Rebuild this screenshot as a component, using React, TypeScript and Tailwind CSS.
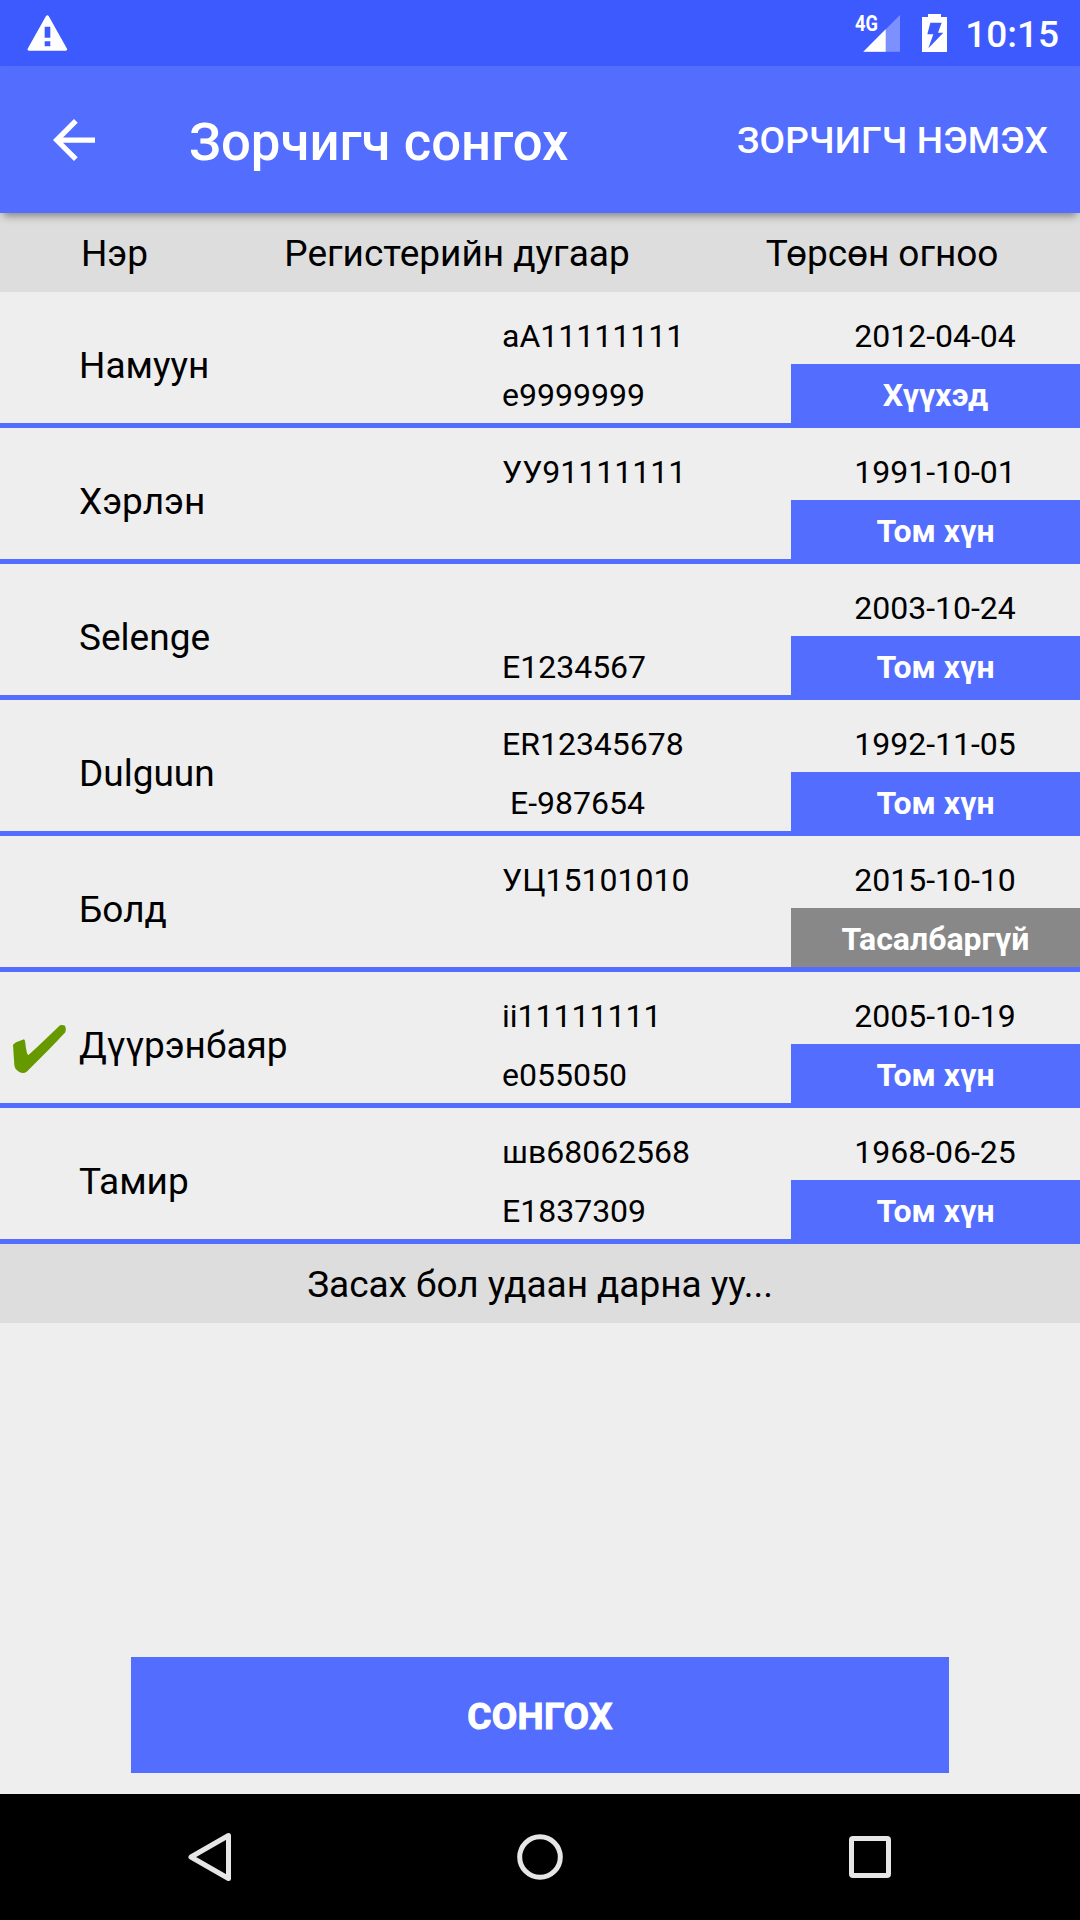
type Passenger = {
  name: string;
  register: string;
  passport: string;
  birth: string;
  kind: string;
  muted?: boolean;
  selected?: boolean;
};

const passengers: Passenger[] = [
  { name: "Намуун", register: "аА11111111", passport: "e9999999", birth: "2012-04-04", kind: "Хүүхэд" },
  { name: "Хэрлэн", register: "УУ91111111", passport: "", birth: "1991-10-01", kind: "Том хүн" },
  { name: "Selenge", register: "", passport: "E1234567", birth: "2003-10-24", kind: "Том хүн" },
  { name: "Dulguun", register: "ER12345678", passport: " E-987654", birth: "1992-11-05", kind: "Том хүн" },
  { name: "Болд", register: "УЦ15101010", passport: "", birth: "2015-10-10", kind: "Тасалбаргүй", muted: true },
  { name: "Дүүрэнбаяр", register: "ii11111111", passport: "e055050", birth: "2005-10-19", kind: "Том хүн", selected: true },
  { name: "Тамир", register: "шв68062568", passport: "E1837309", birth: "1968-06-25", kind: "Том хүн" },
];

function StatusBar() {
  return (
    <div className="flex h-[66px] items-center bg-[#3d5afe] pl-[27px] pr-[21px]">
      <svg className="h-[36px] w-[41px]" viewBox="81 44 123 108" fill="#fff">
        <path
          fillRule="evenodd"
          d="M138 47Q142 42 146 47L201 145Q203 151 197 151H87Q81 151 83 145ZM134 79V112H151V79ZM134 123V138H151V123Z"
        />
      </svg>
      <div className="relative ml-auto h-[37px] w-[46px]">
        <svg className="h-full w-full" viewBox="403 45 138 111">
          <path d="M541 45V155H431Z" fill="#fff" fillOpacity=".33" />
          <path d="M498 88V155H431Z" fill="#fff" />
        </svg>
        <span className="absolute left-px top-0 origin-left scale-x-[.83] text-[22px] font-bold leading-[17px] text-white">4G</span>
      </div>
      <svg className="ml-[22px] h-[38px] w-[25px]" viewBox="606 42 75 114">
        <path
          fill="#fff"
          fillRule="evenodd"
          d="M624 42H663V51H681V156H606V51H624ZM631 68L622 103H640L625 145L670 98H654L665 68Z"
        />
      </svg>
      <span className="ml-[18px] pt-[3px] text-[37px] font-medium leading-none text-white">10:15</span>
    </div>
  );
}

function AppBar() {
  return (
    <div className="relative z-10 flex h-[147px] items-center bg-[#536dfe] pl-[53px] pr-[32px] text-white shadow-[0_6px_8px_-3px_rgba(0,0,0,0.4)]">
      <svg className="h-[42px] w-[42px]" viewBox="0 0 16 16" fill="#fff">
        <path d="M16 7H3.83l5.59-5.59L8 0 0 8l8 8 1.41-1.41L3.83 9H16V7z" />
      </svg>
      <span className="ml-[94px] pt-[6px] text-[52.7px] font-medium leading-none">Зорчигч сонгох</span>
      <span className="ml-auto pt-[2px] text-[37px] font-medium leading-none tracking-[0.17px]">ЗОРЧИГЧ НЭМЭХ</span>
    </div>
  );
}

function Check() {
  return (
    <svg className="mt-[10px] h-[50px] w-[55px]" viewBox="36 192 165 150" fill="#669900">
      <path d="M39 254L48 247L72 238L75 242Q80 286 85 285Q92 281 180 196Q187 193 195 197Q200 207 196 217Q150 267 80 335Q70 342 58 336Q44 328 43 315Z" />
    </svg>
  );
}

function Row({ p }: { p: Passenger }) {
  return (
    <div className="flex h-[136px] border-b-[5px] border-[#536dfe] pt-[13px]">
      <div className="flex w-[79px] items-center pl-[12px]">{p.selected && <Check />}</div>
      <div className="flex w-[423px] items-center pt-[3px] text-[37px] leading-none">{p.name}</div>
      <div className="flex w-[289px] flex-col whitespace-pre text-[32px] leading-none">
        <div className="flex h-[59px] items-center pt-[3px]">{p.register}</div>
        <div className="flex h-[59px] items-center pt-[3px]">{p.passport}</div>
      </div>
      <div className="flex flex-1 flex-col text-[32px] leading-none">
        <div className="flex h-[59px] items-center justify-center pr-px pt-[3px]">{p.birth}</div>
        <div
          className={
            "flex h-[59px] items-center justify-center pt-[3px] font-bold text-white " +
            (p.muted ? "bg-[#888888]" : "bg-[#536dfe]")
          }
        >
          {p.kind}
        </div>
      </div>
    </div>
  );
}

function NavBar() {
  return (
    <div className="flex h-[126px] items-center justify-between bg-black px-[187px]">
      <svg className="h-[50px] w-[46px]" viewBox="0 0 46 50" fill="none" stroke="#e6e6e6" strokeWidth="5" strokeLinejoin="round">
        <path d="M4 25L41.5 3.5V46.5Z" />
      </svg>
      <svg className="h-[46px] w-[46px]" viewBox="0 0 46 46" fill="none" stroke="#e6e6e6" strokeWidth="5">
        <circle cx="23" cy="23" r="20.3" />
      </svg>
      <svg className="h-[46px] w-[46px]" viewBox="0 0 46 46" fill="none" stroke="#e6e6e6" strokeWidth="5">
        <rect x="4.5" y="4.5" width="37" height="37" rx="1.5" />
      </svg>
    </div>
  );
}

export default function App() {
  return (
    <div className="flex h-[1920px] w-[1080px] flex-col overflow-hidden bg-[#eeeeee] font-['Roboto',sans-serif] text-black">
      <StatusBar />
      <AppBar />
      <div className="grid h-[79px] grid-cols-[229px_456px_394px] items-center justify-items-center bg-[#dddddd] pt-[2px] text-[37px] leading-none">
        <span>Нэр</span>
        <span>Регистерийн дугаар</span>
        <span className="tracking-[-0.05px]">Төрсөн огноо</span>
      </div>
      {passengers.map((p) => (
        <Row key={p.name} p={p} />
      ))}
      <div className="flex h-[79px] items-center justify-center bg-[#dddddd] pt-[2px] text-[37px] leading-none tracking-[-0.04px]">
        Засах бол удаан дарна уу...
      </div>
      <button className="mx-[131px] mb-[21px] mt-auto flex h-[116px] items-center justify-center bg-[#536dfe] pt-[3px] text-[37px] font-bold leading-none tracking-[0.25px] text-white [-webkit-text-stroke:1px_white]">
        СОНГОХ
      </button>
      <NavBar />
    </div>
  );
}
